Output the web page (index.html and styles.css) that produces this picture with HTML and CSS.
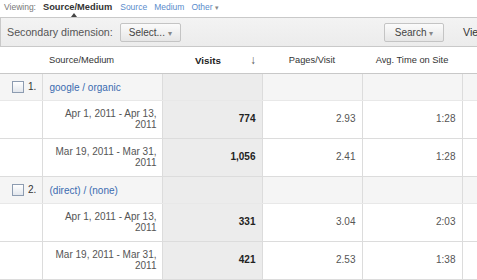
FILE: index.html
```html
<!DOCTYPE html>
<html lang="en">
<head>
  <meta charset="UTF-8" />
  <title>Traffic Sources - Source/Medium</title>
  <link rel="stylesheet" href="styles.css">
</head>
<body>
  <div class="viewing">
    <span class="viewing-label">Viewing:</span>
    <b class="current">Source/Medium</b>
    <a href="#">Source</a>
    <a href="#">Medium</a>
    <a href="#">Other <span class="caret">&#9662;</span></a>
  </div>

  <div class="toolbar">
    <span class="toolbar-label">Secondary dimension:</span>
    <button class="btn btn-select">Select... <span class="caret">&#9662;</span></button>
    <button class="btn btn-search">Search <span class="caret">&#9662;</span></button>
    <span class="view-label">View:</span>
  </div>

  <table class="report">
    <colgroup>
      <col class="col-check">
      <col class="col-dim">
      <col class="col-metric">
      <col class="col-metric">
      <col class="col-metric">
      <col class="col-more">
    </colgroup>
    <thead>
      <tr>
        <th></th>
        <th class="th-dim">Source/Medium</th>
        <th class="th-visits"><div class="sort"><span class="sort-label">Visits</span><span class="sort-arrow">&#8595;</span></div></th>
        <th>Pages/Visit</th>
        <th>Avg. Time on Site</th>
        <th></th>
      </tr>
    </thead>
    <tbody>
      <tr class="group">
        <td class="cell-check"><span class="check"></span><span class="num">1.</span></td>
        <td class="cell-dim"><a href="#">google / organic</a></td>
        <td class="visits"></td>
        <td></td>
        <td></td>
        <td></td>
      </tr>
      <tr class="sub">
        <td></td>
        <td class="date">Apr 1, 2011 - Apr 13, 2011</td>
        <td class="visits">774</td>
        <td>2.93</td>
        <td>1:28</td>
        <td></td>
      </tr>
      <tr class="sub">
        <td></td>
        <td class="date">Mar 19, 2011 - Mar 31, 2011</td>
        <td class="visits">1,056</td>
        <td>2.41</td>
        <td>1:28</td>
        <td></td>
      </tr>
      <tr class="group">
        <td class="cell-check"><span class="check"></span><span class="num">2.</span></td>
        <td class="cell-dim"><a href="#">(direct) / (none)</a></td>
        <td class="visits"></td>
        <td></td>
        <td></td>
        <td></td>
      </tr>
      <tr class="sub">
        <td></td>
        <td class="date">Apr 1, 2011 - Apr 13, 2011</td>
        <td class="visits">331</td>
        <td>3.04</td>
        <td>2:03</td>
        <td></td>
      </tr>
      <tr class="sub">
        <td></td>
        <td class="date">Mar 19, 2011 - Mar 31, 2011</td>
        <td class="visits">421</td>
        <td>2.53</td>
        <td>1:38</td>
        <td></td>
      </tr>
    </tbody>
  </table>
</body>
</html>
```

FILE: styles.css
```css
html {
  overflow: hidden;
}
body {
  margin: 0;
  width: 540px;
  font-family: "Liberation Sans", Arial, sans-serif;
  color: #333;
  background: #fff;
}
a {
  color: #3a6bb0;
  text-decoration: none;
}
.caret {
  font-size: 0.8em;
  color: #888;
}

/* viewing line */
.viewing {
  height: 17px;
  padding-left: 4px;
  font-size: 8.5px;
  line-height: 15px;
  display: flex;
  gap: 7px;
}
.viewing-label {
  color: #777;
}
.viewing a {
  color: #5a8ccc;
}
.current {
  position: relative;
  font-size: 9.3px;
  color: #333;
  margin-right: 1px;
}
.current::after {
  content: "";
  position: absolute;
  left: 28px;
  top: 13px;
  border: 3px solid transparent;
  border-bottom: 4px solid #444;
  border-top: 0;
}

/* toolbar */
.toolbar {
  height: 28px;
  display: flex;
  align-items: center;
  gap: 7px;
  padding: 0 6px;
  background: linear-gradient(#f3f3f3, #ececec);
  border: 1px solid #c9c9c9;
  border-right: 0;
  font-size: 10.7px;
  color: #555;
}
.btn {
  height: 19px;
  padding: 0 7px;
  font-family: inherit;
  font-size: 10px;
  color: #444;
  background: linear-gradient(#fbfbfb, #e6e6e6);
  border: 1px solid #c4c4c4;
  border-radius: 2px;
}
.btn-select {
  width: 61px;
}
.btn-search {
  width: 60px;
  margin-left: auto;
  margin-right: 12px;
}
.view-label {
  width: 71px;
  color: #333;
}

/* report table */
.report {
  border-collapse: collapse;
  table-layout: fixed;
  width: 522px;
  font-size: 10px;
}
.col-check { width: 42px; }
.col-dim { width: 120px; }
.col-metric { width: 100px; }
.col-more { width: 60px; }

.report th {
  height: 26px;
  padding: 0 6px;
  font-size: 9.3px;
  font-weight: normal;
  color: #333;
  text-align: center;
  border-bottom: 1px solid #c8c8c8;
}
.report .th-dim {
  text-align: left;
  padding-left: 7px;
}
.report .th-visits {
  padding-right: 4px;
}
.sort {
  display: flex;
  align-items: center;
}
.sort-label {
  flex: 1;
  text-align: center;
  font-weight: bold;
  font-size: 9.8px;
  color: #222;
}
.sort-arrow {
  width: 10px;
  color: #555;
  font-size: 12px;
  font-weight: bold;
}

.report td {
  padding: 0 6px;
  text-align: right;
  color: #555;
  border-bottom: 1px solid #dcdcdc;
  border-right: 1px solid #dcdcdc;
}
.group td {
  height: 26px;
  background: #f5f5f5;
  border-bottom-color: #e8e8e8;
}
.sub td {
  height: 37px;
  line-height: 10.5px;
}
.report td.visits {
  background: #ececec;
  font-weight: bold;
  color: #222;
}
.report td.date {
  padding-right: 5px;
  color: #555;
}
.report .cell-check {
  text-align: left;
  padding: 0 0 0 12px;
  white-space: nowrap;
}
.check {
  display: inline-block;
  width: 10px;
  height: 10px;
  vertical-align: middle;
  border: 1px solid #8d9cb1;
  background: linear-gradient(#ffffff, #e3e7ed);
}
.num {
  display: inline-block;
  margin-left: 4px;
  vertical-align: top;
  color: #333;
}
.report .cell-dim {
  text-align: left;
  padding-left: 7px;
}
```
